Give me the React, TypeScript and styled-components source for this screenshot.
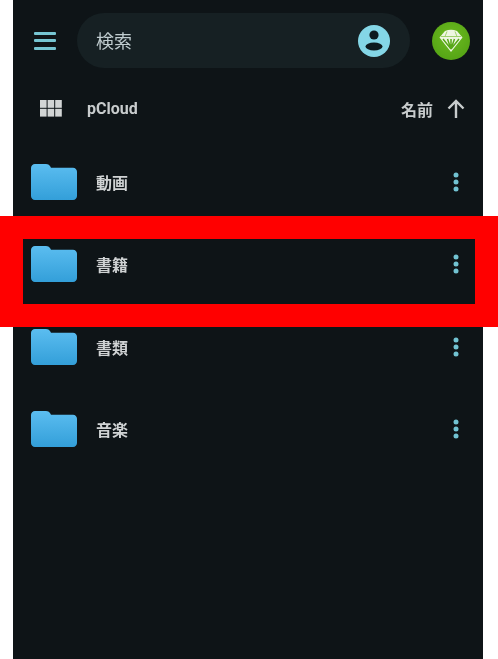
import React from "react";
import styled, { createGlobalStyle } from "styled-components";

const GlobalStyle = createGlobalStyle`
  html, body {
    margin: 0;
    padding: 0;
    background: #fff;
  }
  body {
    font-family: "Roboto", "Noto Sans CJK JP", sans-serif;
  }
`;

const Page = styled.div`
  position: relative;
  width: 498px;
  height: 659px;
  overflow: hidden;
  background: #fff;
`;

const Panel = styled.main`
  width: 470px;
  height: 659px;
  margin-left: 13px;
  background: #0e1417;
  filter: blur(0.7px);
`;

const TopBar = styled.header`
  display: flex;
  align-items: center;
  height: 55px;
  padding: 13px 13px 0 21px;
`;

const MenuButton = styled.div`
  display: flex;
  flex-direction: column;
  gap: 4.5px;
  width: 22px;
  margin-right: 21px;
`;

const MenuLine = styled.span`
  height: 3px;
  border-radius: 1px;
  background: #76c5d2;
`;

const SearchBar = styled.div`
  flex: 0 0 333px;
  height: 55px;
  box-sizing: border-box;
  display: flex;
  align-items: center;
  justify-content: space-between;
  padding: 0 20px 0 19px;
  border-radius: 28px;
  background: #162023;
`;

const SearchText = styled.span`
  color: #c0cccf;
  font-size: 18px;
  margin-top: -2px;
`;

const GemBadge = styled.div`
  margin-left: 22px;
  width: 38px;
  height: 38px;
  flex: none;
  display: flex;
  align-items: center;
  justify-content: center;
  border-radius: 50%;
  background: radial-gradient(circle at 50% 40%, #6cbb20, #4f9e12);
`;

const SortBar = styled.div`
  display: flex;
  align-items: center;
  height: 41px;
  margin-top: 20px;
  padding: 0 17px 0 27px;
  color: #c8cccd;
  font-size: 16px;
  font-weight: 700;
`;

const BreadCrumb = styled.span`
  flex: 1;
  margin-left: 25px;
`;

const SortLabel = styled.span`
  margin-right: 13px;
`;

const List = styled.ul`
  list-style: none;
  margin: 12px 0 0;
  padding: 0;
`;

const Row = styled.li`
  display: flex;
  align-items: center;
  height: 82.3px;
  padding: 0 24px 0 18px;
`;

const RowName = styled.span`
  flex: 1;
  margin-left: 19px;
  color: #d0d3d4;
  font-size: 16px;
  font-weight: 700;
`;

const Highlight = styled.div`
  position: absolute;
  left: 0;
  top: 216px;
  width: 498px;
  height: 111px;
  box-sizing: border-box;
  border: 23px solid #ff0000;
`;

const GridIcon = () => (
  <svg width="22" height="18" viewBox="0 0 22 18" fill="#d2d5d5">
    <rect x="0" y="0" width="6.6" height="7.8" />
    <rect x="7.6" y="0" width="6.6" height="7.8" />
    <rect x="15.2" y="0" width="6.6" height="7.8" />
    <rect x="0" y="8.8" width="6.6" height="7.8" />
    <rect x="7.6" y="8.8" width="6.6" height="7.8" />
    <rect x="15.2" y="8.8" width="6.6" height="7.8" />
  </svg>
);

const ArrowUp = () => (
  <svg width="20" height="20" viewBox="0 0 20 20" fill="none" stroke="#c8cccd" strokeWidth="2.4">
    <path d="M10 19V2M2.5 9.5 10 2l7.5 7.5" />
  </svg>
);

const Avatar = () => (
  <svg width="32" height="32" viewBox="0 0 32 32">
    <circle cx="16" cy="16" r="16" fill="#84d6e6" />
    <circle cx="16" cy="10" r="4.6" fill="#0e1a1e" />
    <ellipse cx="16" cy="21.5" rx="8.5" ry="4" fill="#0e1a1e" />
  </svg>
);

const Gem = () => (
  <svg width="26" height="26" viewBox="0 0 26 26">
    <path d="M7 3c4-1.6 8-1.6 12 0l5.5 6.5L13 24 1.5 9.5Z" fill="#eef6e2" />
    <path
      d="M5 11 13 21M9.5 11 13 21M13 11V21M16.5 11 13 21M21 11 13 21"
      stroke="#58a818"
      strokeWidth="1.5"
      fill="none"
    />
    <path d="M3 8.5h20M9 3.5 7 8.5M17 3.5l2 5" stroke="#8cc850" strokeWidth="0.8" fill="none" />
  </svg>
);

const FolderIcon = () => (
  <svg width="46" height="36" viewBox="0 0 46 36">
    <defs>
      <linearGradient id="folderFill" x1="0" y1="0" x2="0" y2="1">
        <stop offset="0" stopColor="#5bbdf0" />
        <stop offset="1" stopColor="#339fd9" />
      </linearGradient>
    </defs>
    <path
      d="M4 0h11c2 0 3 .8 4 2l1 1.8H42c2.3 0 4 1.7 4 4V32c0 2.3-1.7 4-4 4H4c-2.3 0-4-1.7-4-4V4c0-2.3 1.7-4 4-4Z"
      fill="url(#folderFill)"
    />
  </svg>
);

const MoreIcon = () => (
  <svg width="6" height="20" viewBox="0 0 6 20" fill="#72c3d2">
    <circle cx="3" cy="3" r="2.5" />
    <circle cx="3" cy="10" r="2.5" />
    <circle cx="3" cy="17" r="2.5" />
  </svg>
);

const folders = ["動画", "書籍", "書類", "音楽"];

const App = (): React.JSX.Element => {
  return (
    <Page>
      <GlobalStyle />
      <Panel>
        <TopBar>
          <MenuButton>
            <MenuLine />
            <MenuLine />
            <MenuLine />
          </MenuButton>
          <SearchBar>
            <SearchText>検索</SearchText>
            <Avatar />
          </SearchBar>
          <GemBadge>
            <Gem />
          </GemBadge>
        </TopBar>
        <SortBar>
          <GridIcon />
          <BreadCrumb>pCloud</BreadCrumb>
          <SortLabel>名前</SortLabel>
          <ArrowUp />
        </SortBar>
        <List>
          {folders.map((name) => (
            <Row key={name}>
              <FolderIcon />
              <RowName>{name}</RowName>
              <MoreIcon />
            </Row>
          ))}
        </List>
      </Panel>
      <Highlight />
    </Page>
  );
};

export default App;
